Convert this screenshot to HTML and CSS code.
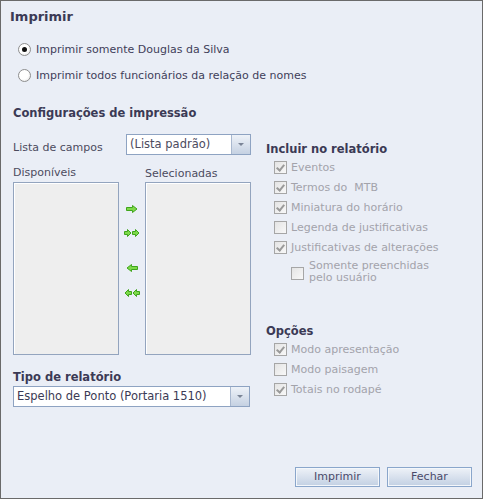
FILE: index.html
```html
<!DOCTYPE html>
<html lang="pt">
<head>
<meta charset="utf-8">
<link rel="stylesheet" href="styles.css">
</head>
<body>
<div class="dialog">
  <div class="title">Imprimir</div>
  <div class="radios">
    <label class="radio-row"><span class="radio checked"></span><span>Imprimir somente Douglas da Silva</span></label>
    <label class="radio-row"><span class="radio"></span><span>Imprimir todos funcionários da relação de nomes</span></label>
  </div>
  <div class="section-title">Configurações de impressão</div>
  <div class="columns">
    <div class="left">
      <div class="field-row">
        <span class="label">Lista de campos</span>
        <div class="select small"><span class="select-text">(Lista padrão)</span><span class="select-btn"><span class="tri"></span></span></div>
      </div>
      <div class="lists">
        <div class="list-col">
          <div class="label">Disponíveis</div>
          <div class="listbox"></div>
        </div>
        <div class="arrows">
          <svg class="arrow a1" width="12" height="8" viewBox="0 0 12 8"><path d="M0.5 2.5H6.5V0.5L11 4L6.5 7.5V5.5H0.5Z" fill="#7ed94a" stroke="#3fa51c" stroke-width="1"/></svg>
          <svg class="arrow a2" width="16" height="8" viewBox="0 0 16 8"><path d="M0.5 2.5H3.5V0.5L7 4L3.5 7.5V5.5H0.5Z" fill="#7ed94a" stroke="#3fa51c"/><path d="M8.5 2.5H11.5V0.5L15 4L11.5 7.5V5.5H8.5Z" fill="#7ed94a" stroke="#3fa51c"/></svg>
          <svg class="arrow a3" width="12" height="8" viewBox="0 0 12 8"><path d="M11.5 2.5H5.5V0.5L1 4L5.5 7.5V5.5H11.5Z" fill="#7ed94a" stroke="#3fa51c" stroke-width="1"/></svg>
          <svg class="arrow a4" width="16" height="8" viewBox="0 0 16 8"><path d="M7.5 2.5H4.5V0.5L1 4L4.5 7.5V5.5H7.5Z" fill="#7ed94a" stroke="#3fa51c"/><path d="M15.5 2.5H12.5V0.5L9 4L12.5 7.5V5.5H15.5Z" fill="#7ed94a" stroke="#3fa51c"/></svg>
        </div>
        <div class="list-col">
          <div class="label sel-label">Selecionadas</div>
          <div class="listbox"></div>
        </div>
      </div>
      <div class="sub-title">Tipo de relatório</div>
      <div class="select wide"><span class="select-text dark">Espelho de Ponto (Portaria 1510)</span><span class="select-btn"><span class="tri"></span></span></div>
    </div>
    <div class="right">
      <div class="sub-title r1">Incluir no relatório</div>
      <div class="check-row"><span class="cb on"></span><span>Eventos</span></div>
      <div class="check-row"><span class="cb on"></span><span>Termos do &nbsp;MTB</span></div>
      <div class="check-row"><span class="cb on"></span><span>Miniatura do horário</span></div>
      <div class="check-row"><span class="cb"></span><span>Legenda de justificativas</span></div>
      <div class="check-row"><span class="cb on"></span><span>Justificativas de alterações</span></div>
      <div class="check-row nested"><span class="cb"></span><span class="two-line">Somente preenchidas<br>pelo usuário</span></div>
      <div class="sub-title r2">Opções</div>
      <div class="check-row"><span class="cb on"></span><span>Modo apresentação</span></div>
      <div class="check-row"><span class="cb"></span><span>Modo paisagem</span></div>
      <div class="check-row"><span class="cb on"></span><span>Totais no rodapé</span></div>
    </div>
  </div>
  <div class="footer">
    <button class="btn">Imprimir</button>
    <button class="btn">Fechar</button>
  </div>
</div>
</body>
</html>
```
FILE: styles.css
```css
html, body {
  margin: 0;
  padding: 0;
}
body {
  font-family: "DejaVu Sans", Verdana, sans-serif;
  font-size: 11px;
  color: #47465e;
}
.dialog {
  width: 483px;
  height: 499px;
  box-sizing: border-box;
  border: 1px solid #6a6a6a;
  background: #eaeef6;
  display: flex;
  flex-direction: column;
}
.title {
  margin: 8px 0 0 9px;
  font-size: 13px;
  font-weight: bold;
  line-height: 16px;
  color: #3b3a55;
}
.radios {
  margin: 14px 0 0 17px;
  display: flex;
  flex-direction: column;
  gap: 6px;
}
.radio-row {
  display: flex;
  align-items: center;
  height: 20px;
  gap: 5px;
  color: #3f3e5a;
}
.radio {
  width: 11px;
  height: 11px;
  border-radius: 50%;
  border: 1px solid #8e8e8e;
  background: radial-gradient(circle at 40% 40%, #ffffff 50%, #dcdcdc 100%);
  position: relative;
  flex: none;
}
.radio.checked::after {
  content: "";
  position: absolute;
  left: 3px;
  top: 3px;
  width: 5px;
  height: 5px;
  border-radius: 50%;
  background: #111;
}
.section-title {
  margin: 20px 0 0 12px;
  font-weight: bold;
  font-size: 11.5px;
  line-height: 16px;
  color: #3b3a55;
}
.columns {
  display: flex;
  margin-left: 12px;
}
.left {
  width: 238px;
  display: flex;
  flex-direction: column;
}
.field-row {
  margin-top: 13px;
  display: flex;
  align-items: center;
  justify-content: space-between;
  height: 21px;
}
.field-row .label {
  padding-top: 7px;
}
.label {
  color: #4c4b5e;
  line-height: 14px;
}
.select {
  display: flex;
  height: 21px;
  box-sizing: border-box;
  border: 1px solid #8ea3c2;
  background: #fff;
}
.select.small {
  width: 125px;
}
.select.wide {
  width: 237px;
}
.select-text {
  flex: 1;
  padding-left: 3px;
  line-height: 19px;
  color: #4c4b5e;
  font-size: 11.5px;
}
.select-text.dark {
  color: #3b3a55;
}
.select-btn {
  width: 18px;
  border-left: 1px solid #a9b8cf;
  background: linear-gradient(#eef2f8, #c5d1e2);
  display: flex;
  align-items: center;
  justify-content: center;
}
.tri {
  width: 0;
  height: 0;
  border-left: 3px solid transparent;
  border-right: 3px solid transparent;
  border-top: 3px solid #7a8496;
}
.lists {
  margin-top: 11px;
  display: flex;
}
.list-col {
  display: flex;
  flex-direction: column;
  gap: 2px;
}
.sel-label {
  padding-top: 1px;
  margin-bottom: -1px;
}
.listbox {
  width: 106px;
  height: 173px;
  box-sizing: border-box;
  border: 1px solid #93a4be;
  box-shadow: inset 1px 1px 0 #ffffff;
  background: #eeeeee;
}
.arrows {
  width: 26px;
  display: flex;
  flex-direction: column;
  align-items: center;
  padding-top: 39px;
}
.arrow {
  display: block;
}
.a2 { margin-top: 16px; }
.a3 { margin-top: 27px; }
.a4 { margin-top: 17px; }
.sub-title {
  font-weight: bold;
  line-height: 16px;
  color: #3b3a55;
  font-size: 11.5px;
}
.left .sub-title {
  margin-top: 14px;
  margin-bottom: 1px;
}
.right {
  margin-left: 15px;
  display: flex;
  flex-direction: column;
}
.r1 { margin-top: 20px; margin-bottom: 0; }
.r2 { margin-top: 36px; margin-bottom: 0; }
.check-row {
  display: flex;
  align-items: center;
  height: 20px;
  gap: 4px;
  padding-left: 8px;
  color: #a3a3ab;
}
.check-row.nested {
  padding-left: 25px;
  height: 28px;
  gap: 5px;
  align-items: flex-start;
  padding-top: 2px;
}
.check-row.nested .cb {
  margin-top: 8px;
}
.two-line {
  line-height: 12px;
  padding-top: 1px;
}
.cb {
  width: 11px;
  height: 11px;
  border: 1px solid #a6a6a6;
  background: linear-gradient(135deg, #e4e4e4, #f8f8f8);
  flex: none;
  position: relative;
}
.cb.on::after {
  content: "";
  position: absolute;
  left: 3px;
  top: 1px;
  width: 3px;
  height: 6px;
  border-right: 2px solid #9a9a9a;
  border-bottom: 2px solid #9a9a9a;
  transform: rotate(40deg);
}
.footer {
  margin-top: auto;
  margin-bottom: 11px;
  margin-right: 10px;
  display: flex;
  justify-content: flex-end;
  gap: 7px;
}
.btn {
  width: 85px;
  height: 20px;
  box-sizing: border-box;
  border: 1px solid #8aa6cb;
  box-shadow: inset 0 0 0 1px #f4f7fb;
  background: linear-gradient(#eef2f8, #c2d0e3);
  font-family: "DejaVu Sans", Verdana, sans-serif;
  font-size: 11px;
  color: #4a4a6a;
  padding: 0;
  line-height: 16px;
}
```
